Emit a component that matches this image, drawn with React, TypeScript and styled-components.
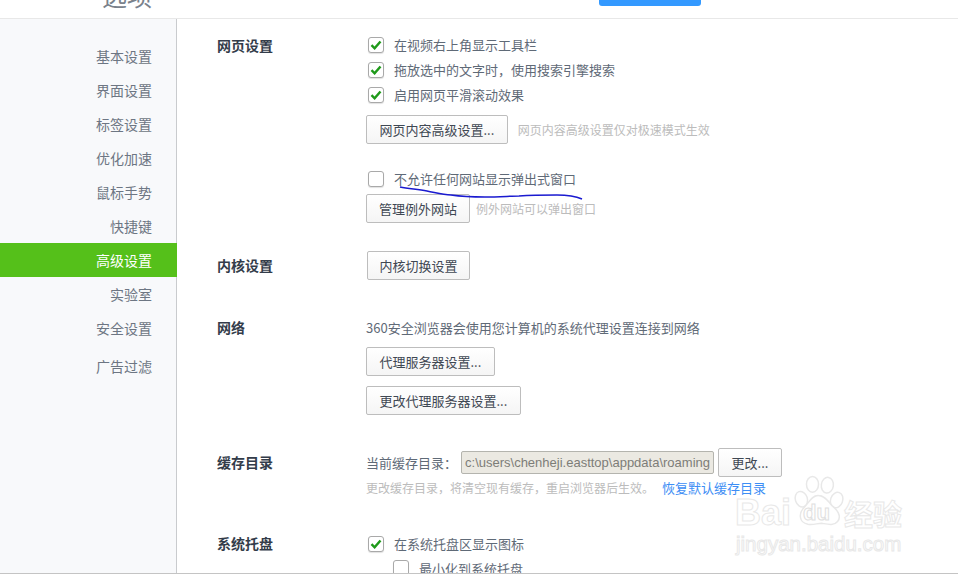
import React from "react";
import styled, { createGlobalStyle } from "styled-components";

const NAV_ITEMS = [
  "基本设置",
  "界面设置",
  "标签设置",
  "优化加速",
  "鼠标手势",
  "快捷键",
  "高级设置",
  "实验室",
  "安全设置",
  "广告过滤",
];

const Checkbox = ({ checked }: { checked?: boolean }) => (
  <CheckBoxFrame>
    {checked && (
      <svg width="12" height="10" viewBox="0 0 12 10">
        <path d="M1.5 5.2 L4.6 8.3 L10.5 1.5" fill="none" stroke="#1f9a1a" strokeWidth="2.4" />
      </svg>
    )}
  </CheckBoxFrame>
);

const App = () => {
  return (
    <Page>
      <GlobalStyle />
      <Header>
        <Title>选项</Title>
        <SaveButton />
      </Header>
      <Body>
        <Sidebar>
          {NAV_ITEMS.map((name) => (
            <NavItem key={name} $active={name === "高级设置"} $last={name === "广告过滤"}>
              {name}
            </NavItem>
          ))}
        </Sidebar>
        <Main>
          <Section $top={13}>
            <SectionTitle $offset={1}>网页设置</SectionTitle>
            <div>
              <OptionRow>
                <Checkbox checked />
                在视频右上角显示工具栏
              </OptionRow>
              <OptionRow>
                <Checkbox checked />
                拖放选中的文字时，使用搜索引擎搜索
              </OptionRow>
              <OptionRow>
                <Checkbox checked />
                启用网页平滑滚动效果
              </OptionRow>
              <ButtonRow $top={8}>
                <Button>网页内容高级设置...</Button>
                <Hint>网页内容高级设置仅对极速模式生效</Hint>
              </ButtonRow>
              <OptionRow $top={22}>
                <Checkbox />
                不允许任何网站显示弹出式窗口
              </OptionRow>
              <ButtonRow $top={3}>
                <Button $pad={12}>管理例外网站</Button>
                <Hint $gap={6}>例外网站可以弹出窗口</Hint>
              </ButtonRow>
            </div>
          </Section>

          <Section $top={28}>
            <SectionTitle $offset={2}>内核设置</SectionTitle>
            <ButtonRow $indent={1}>
              <Button $pad={11.5}>内核切换设置</Button>
            </ButtonRow>
          </Section>

          <Section $top={35}>
            <SectionTitle>网络</SectionTitle>
            <div>
              <PlainText>360安全浏览器会使用您计算机的系统代理设置连接到网络</PlainText>
              <ButtonRow $top={7}>
                <Button>代理服务器设置...</Button>
              </ButtonRow>
              <ButtonRow $top={10}>
                <Button>更改代理服务器设置...</Button>
              </ButtonRow>
            </div>
          </Section>

          <Section $top={33}>
            <SectionTitle $offset={2}>缓存目录</SectionTitle>
            <div>
              <CacheRow>
                <PlainText>当前缓存目录：</PlainText>
                <PathField>c:\users\chenheji.easttop\appdata\roaming</PathField>
                <Button>更改...</Button>
              </CacheRow>
              <CacheHint>
                <Hint $gap={0}>更改缓存目录，将清空现有缓存，重启浏览器后生效。</Hint>
                <RestoreLink>恢复默认缓存目录</RestoreLink>
              </CacheHint>
            </div>
          </Section>

          <Section $top={34}>
            <SectionTitle>系统托盘</SectionTitle>
            <div>
              <OptionRow>
                <Checkbox checked />
                在系统托盘区显示图标
              </OptionRow>
              <OptionRow $indent={25} $height={24}>
                <Checkbox />
                最小化到系统托盘
              </OptionRow>
            </div>
          </Section>
        </Main>
      </Body>

      <Scribble width="190" height="16" viewBox="0 0 190 16">
        <path
          d="M1 2 C10 4 18 4 28 6 C38 8 44 10 52 10 C66 12 76 12 86 12 C100 12 112 11 120 11 C134 10 146 10 158 10 C168 10 176 11 183 14"
          fill="none"
          stroke="#1a1ad0"
          strokeWidth="1.5"
        />
      </Scribble>

      <Watermark>
        <Paw width="52" height="54" viewBox="0 0 56 56">
          <g fill="#fff" stroke="#e8e8e8" strokeWidth="1.6">
            <ellipse cx="9" cy="26" rx="6.5" ry="8.5" transform="rotate(-18 9 26)" />
            <ellipse cx="21" cy="10" rx="6.5" ry="8.5" />
            <ellipse cx="37" cy="11" rx="6.5" ry="8.5" transform="rotate(8 37 11)" />
            <ellipse cx="47" cy="27" rx="6.5" ry="8.5" transform="rotate(20 47 27)" />
            <path d="M27 22 C20 22 17 30 12 35 C6 41 6 51 16 53 C22 54 26 52 31 52 C37 53 44 55 48 50 C53 44 47 37 42 33 C38 29 35 22 27 22Z" />
          </g>
        </Paw>
        <BrandLine>
          <BrandBai>Bai</BrandBai>
          <BrandDu>du</BrandDu>
          <BrandCn>经验</BrandCn>
        </BrandLine>
        <BrandUrl>jingyan.baidu.com</BrandUrl>
      </Watermark>
    </Page>
  );
};

const GlobalStyle = createGlobalStyle`
  html, body {
    margin: 0;
    padding: 0;
    background: #fff;
    overflow: hidden;
  }
`;

const Page = styled.div`
  position: relative;
  width: 958px;
  height: 574px;
  box-sizing: border-box;
  display: flex;
  flex-direction: column;
  overflow: hidden;
  background: #fff;
  border-bottom: 1px solid #c4c4c4;
  font-family: "Noto Sans CJK SC", "Liberation Sans", sans-serif;
  font-size: 13px;
  color: #5f6a77;
`;

const Header = styled.div`
  flex: none;
  height: 19px;
  box-sizing: border-box;
  display: flex;
  align-items: flex-end;
  border-bottom: 1px solid #e8e8e8;
  overflow: hidden;
`;

const Title = styled.div`
  margin-left: 102px;
  margin-bottom: 8px;
  font-size: 25px;
  line-height: 30px;
  color: #7a828c;
`;

const SaveButton = styled.div`
  align-self: flex-start;
  width: 102px;
  height: 30px;
  margin: -24px 0 0 447px;
  background: #3399ff;
  border-radius: 3px;
`;

const Body = styled.div`
  flex: 1;
  min-height: 0;
  display: flex;
`;

const Sidebar = styled.div`
  flex: none;
  width: 177px;
  box-sizing: border-box;
  padding-top: 20px;
  background: #f8f9fb;
  border-right: 1px solid #c9cbce;
`;

const NavItem = styled.div<{ $active?: boolean; $last?: boolean }>`
  height: 34px;
  line-height: 34px;
  padding-right: ${(p) => (p.$active ? "25px" : "24px")};
  margin-top: ${(p) => (p.$last ? "4px" : "0")};
  margin-right: ${(p) => (p.$active ? "-1px" : "0")};
  text-align: right;
  font-size: 14px;
  color: ${(p) => (p.$active ? "#fff" : "#6d7683")};
  background: ${(p) => (p.$active ? "#55c01a" : "transparent")};
`;

const Main = styled.div`
  flex: 1;
  min-width: 0;
  padding-left: 40px;
  overflow: hidden;
`;

const Section = styled.div<{ $top: number }>`
  display: grid;
  grid-template-columns: 149px 1fr;
  margin-top: ${(p) => p.$top}px;
`;

const SectionTitle = styled.div<{ $offset?: number }>`
  padding-top: ${(p) => p.$offset ?? 0}px;
  font-size: 14px;
  line-height: 25px;
  font-weight: 700;
  color: #333c4a;
`;

const OptionRow = styled.div<{ $top?: number; $indent?: number; $height?: number }>`
  display: flex;
  align-items: center;
  height: ${(p) => p.$height ?? 25}px;
  margin-top: ${(p) => p.$top ?? 0}px;
  margin-left: ${(p) => (p.$indent ?? 0) + 2}px;
  white-space: nowrap;
  line-height: 25px;
`;

const CheckBoxFrame = styled.span`
  flex: none;
  width: 16px;
  height: 16px;
  box-sizing: border-box;
  margin-right: 10px;
  display: flex;
  align-items: center;
  justify-content: center;
  background: #fff;
  border: 1px solid #a9a9a9;
  border-radius: 3px;
  box-shadow: 0 1px 1px rgba(0, 0, 0, 0.12);
`;

const ButtonRow = styled.div<{ $top?: number; $indent?: number }>`
  display: flex;
  align-items: center;
  margin-top: ${(p) => p.$top ?? 0}px;
  margin-left: ${(p) => p.$indent ?? 0}px;
`;

const Button = styled.button<{ $pad?: number }>`
  flex: none;
  height: 29px;
  padding: 0 ${(p) => p.$pad ?? 12.5}px;
  background: linear-gradient(#ffffff, #f5f5f5);
  border: 1px solid #bdbdbd;
  border-radius: 2px;
  font-family: inherit;
  font-size: 13px;
  line-height: 27px;
  color: #3f4853;
  white-space: nowrap;
`;

const Hint = styled.span<{ $gap?: number }>`
  margin-left: ${(p) => p.$gap ?? 10}px;
  font-size: 12px;
  color: #bcbcbc;
  white-space: nowrap;
`;

const PlainText = styled.div`
  line-height: 25px;
  white-space: nowrap;
`;

const CacheRow = styled.div`
  display: flex;
  align-items: center;
  height: 29px;
`;

const PathField = styled.div`
  width: 253px;
  height: 23px;
  box-sizing: border-box;
  margin: 0 4px;
  padding: 0 3px;
  background: #ebe9e2;
  border: 1px solid #b4b4ae;
  border-radius: 2px;
  font-family: "Liberation Sans", sans-serif;
  font-size: 13px;
  line-height: 21px;
  color: #7d7d78;
  white-space: nowrap;
  overflow: hidden;
`;

const CacheHint = styled.div`
  display: flex;
  align-items: center;
  height: 20px;
`;

const RestoreLink = styled.a`
  margin-left: 8px;
  font-size: 13px;
  color: #3d8ef5;
  white-space: nowrap;
`;

const Scribble = styled.svg`
  position: absolute;
  left: 399px;
  top: 185px;
`;

const Watermark = styled.div`
  position: absolute;
  left: 734px;
  top: 474px;
  width: 190px;
  height: 90px;
  color: transparent;
  -webkit-text-stroke: 1px #e8e8e8;
  font-family: "Liberation Sans", sans-serif;
  font-weight: 700;
`;

const Paw = styled.svg`
  position: absolute;
  left: 59px;
  top: 0;
`;

const BrandLine = styled.div`
  position: absolute;
  left: 1px;
  top: 19px;
  display: flex;
  align-items: center;
  white-space: nowrap;
`;

const BrandBai = styled.span`
  font-size: 36px;
  line-height: 40px;
`;

const BrandDu = styled.span`
  margin-left: 12px;
  font-size: 22px;
  line-height: 40px;
  -webkit-text-stroke-color: #e0e0e0;
`;

const BrandCn = styled.span`
  margin-left: 14px;
  font-family: "Noto Sans CJK SC", sans-serif;
  font-size: 29px;
  line-height: 40px;
`;

const BrandUrl = styled.div`
  position: absolute;
  left: 2px;
  top: 58px;
  font-size: 20.5px;
  font-weight: 400;
  line-height: 24px;
  white-space: nowrap;
`;

export default App;
